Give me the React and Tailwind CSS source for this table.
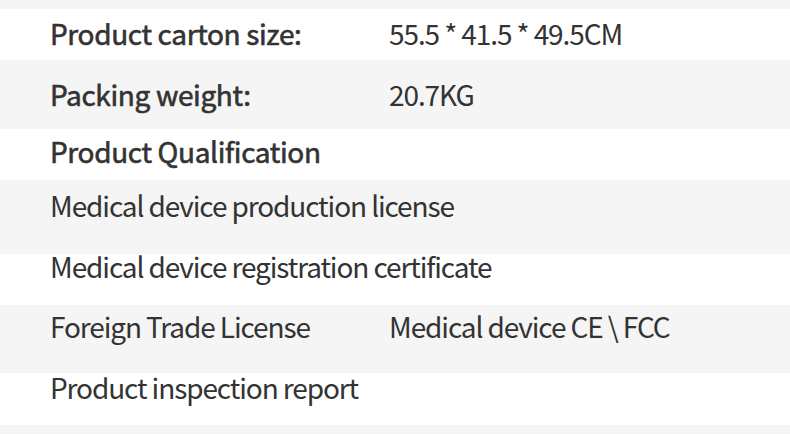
import React from 'react';

const rows = [
  { bg: 'gray', h: 'h-[9px]' },
  { bg: 'white', h: 'h-[51px]', pt: 'pt-[12px]', label: 'Product carton size:', value: '55.5 * 41.5 * 49.5CM', strong: true },
  { bg: 'gray', h: 'h-[69px]', pt: 'pt-[22px]', label: 'Packing weight:', value: '20.7KG', strong: true },
  { bg: 'white', h: 'h-[51px]', pt: 'pt-[10px]', label: 'Product Qualification', strong: true },
  { bg: 'gray', h: 'h-[74px]', pt: 'pt-[13px]', label: 'Medical device production license' },
  { bg: 'white', h: 'h-[51px]', pt: 'pt-0', label: 'Medical device registration certificate' },
  { bg: 'gray', h: 'h-[68px]', pt: 'pt-[9px]', label: 'Foreign Trade License', value: 'Medical device CE \\ FCC' },
  { bg: 'white', h: 'h-[52px]', pt: 'pt-[2px]', label: 'Product inspection report' },
  { bg: 'gray', h: 'h-[9px]' },
];

export default function App() {
  return (
    <div className="w-[790px] h-[434px] overflow-hidden bg-white text-[#333333] font-['Noto_Sans_CJK_SC',sans-serif] text-[28px] leading-[24px] tracking-[-1.1px]">
      {rows.map((row, i) => (
        <div
          key={i}
          className={`${row.h} ${row.pt || ''} ${row.bg === 'gray' ? 'bg-[#f5f5f5]' : 'bg-white'} flex pl-[50px]`}
        >
          {row.label && (
            <>
              <div
                className={`w-[339px] shrink-0 whitespace-nowrap font-normal ${
                  row.strong ? 'tracking-[-0.35px] [-webkit-text-stroke:0.6px_#333333]' : ''
                }`}
              >
                {row.label}
              </div>
              {row.value && <div className="whitespace-nowrap">{row.value}</div>}
            </>
          )}
        </div>
      ))}
    </div>
  );
}
